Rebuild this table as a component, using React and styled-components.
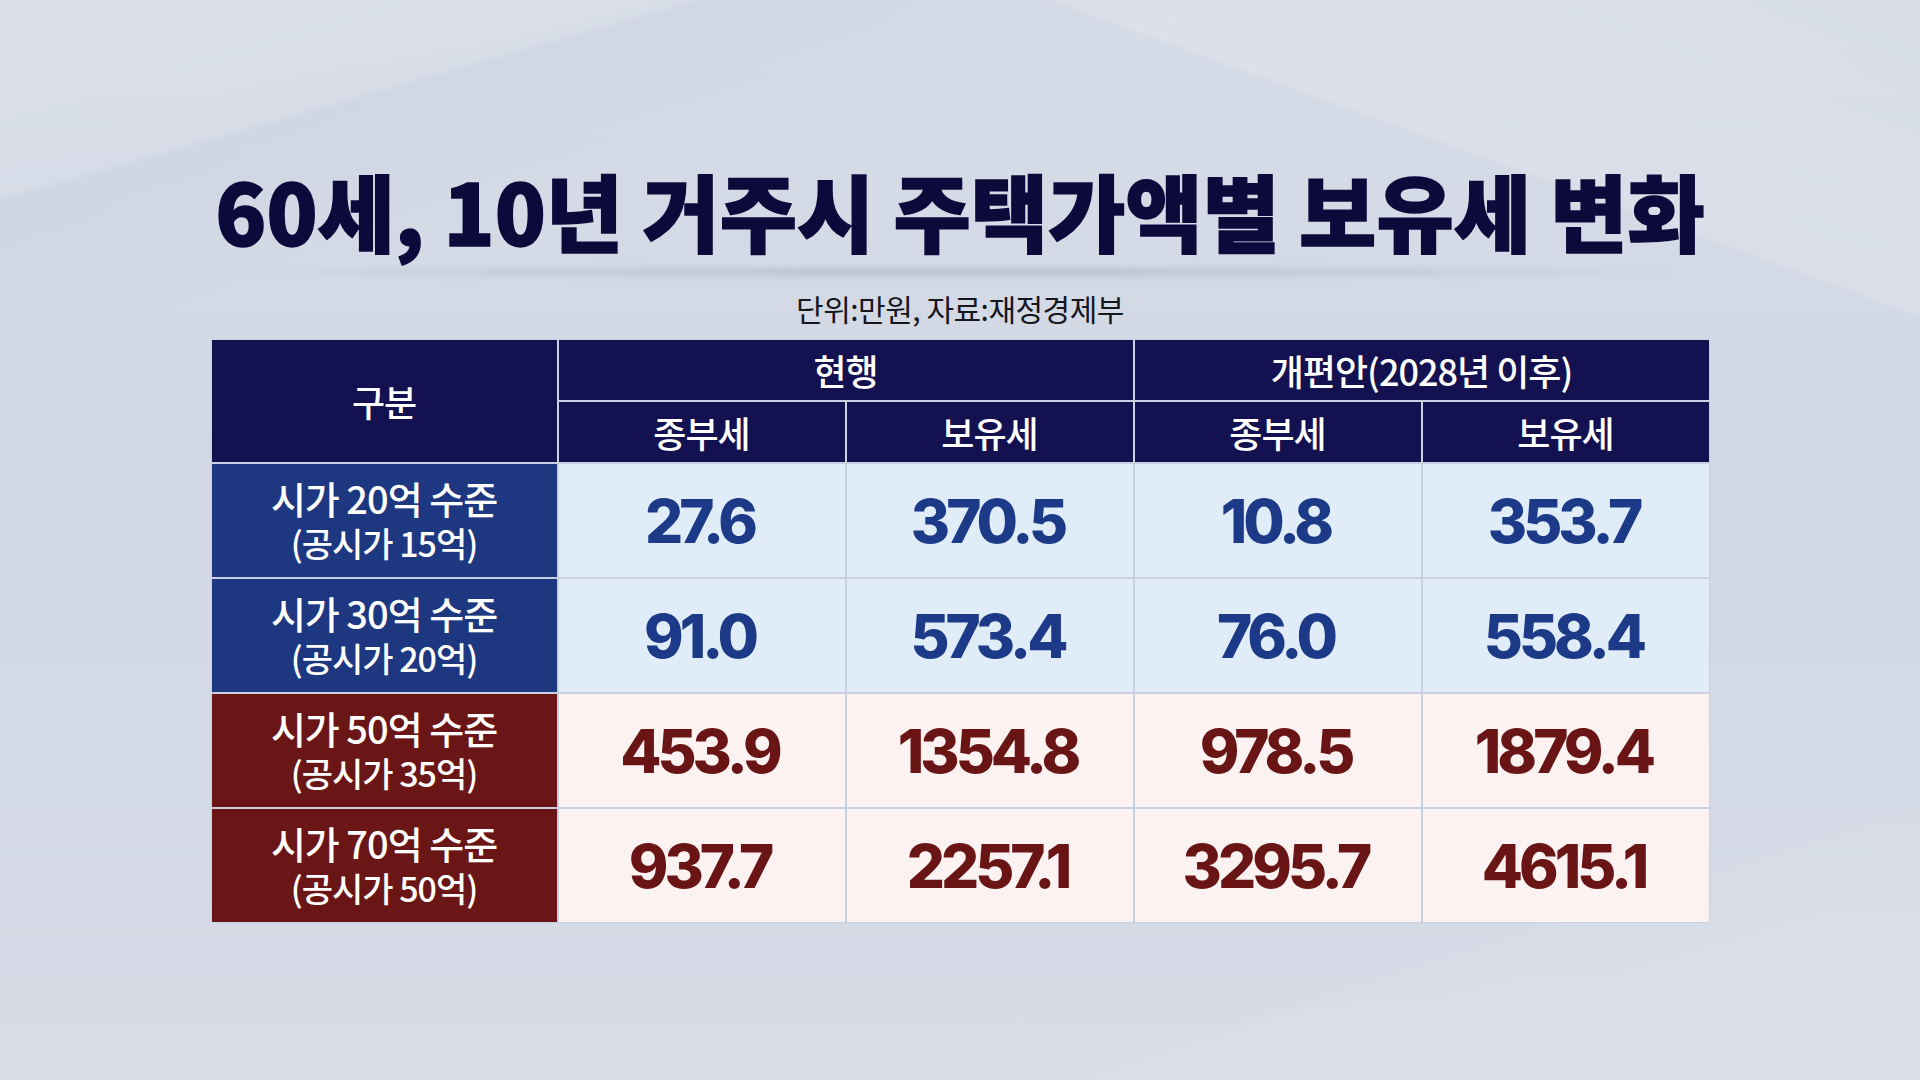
import React from "react";
import styled, { createGlobalStyle } from "styled-components";

const GlobalStyle = createGlobalStyle`
    html, body {
        margin: 0;
        padding: 0;
    }
    body {
        font-family: "Noto Sans CJK KR", "Noto Sans", sans-serif;
    }
`;

const Page = styled.div`
    width: 1920px;
    height: 1080px;
    overflow: hidden;
    display: flex;
    flex-direction: column;
    align-items: center;
    box-sizing: border-box;
    padding-top: 162px;
    background:
        linear-gradient(164deg, rgba(255, 255, 255, 0.12) 0%, rgba(255, 255, 255, 0.06) 12%, rgba(150, 160, 185, 0.08) 12.5%, transparent 22%),
        linear-gradient(20deg, transparent 82%, rgba(255, 255, 255, 0.14) 82.4%, rgba(255, 255, 255, 0.04) 100%),
        linear-gradient(-18deg, rgba(255, 255, 255, 0.12) 0%, rgba(255, 255, 255, 0.05) 16%, transparent 16.4%),
        linear-gradient(180deg, #d6dce7 0%, #d1d8e4 45%, #d7dce7 100%);
`;

const Title = styled.h1`
    margin: 0;
    font-family: "Noto Sans CJK KR", sans-serif;
    font-weight: 900;
    font-size: 84px;
    line-height: 96px;
    color: #0b0a3b;
    -webkit-text-stroke: 1.5px #0b0a3b;
`;

const TitleShadow = styled.div`
    width: 1460px;
    height: 10px;
    margin-top: 9px;
    border-radius: 50%;
    background: radial-gradient(ellipse at center, rgba(140, 150, 172, 0.5) 0%, rgba(140, 150, 172, 0.18) 55%, transparent 72%);
    filter: blur(3px);
`;

const Source = styled.div`
    margin-top: 13px;
    font-size: 30px;
    line-height: 36px;
    letter-spacing: -0.5px;
    color: #16161e;
`;

const Table = styled.div`
    margin-top: 13px;
    width: 1499px;
    display: grid;
    grid-template-columns: 345px repeat(4, 1fr);
    grid-template-rows: 60px 60px repeat(4, 113px);
    gap: 2px;
    padding: 1px;
    box-sizing: border-box;
    background: #c8d0e2;
`;

const HeadCell = styled.div`
    display: flex;
    align-items: center;
    justify-content: center;
    background: #13114f;
    color: #ffffff;
    font-size: 36px;
    line-height: 44px;
    font-weight: 500;
    letter-spacing: -1px;
    grid-column: ${p => p.$col || "auto"};
    grid-row: ${p => p.$row || "auto"};
`;

const LabelCell = styled.div`
    display: flex;
    flex-direction: column;
    align-items: center;
    justify-content: center;
    gap: 4px;
    padding-bottom: 2px;
    background: ${p => (p.$tone === "red" ? "#6b1616" : "#1d3781")};
    color: #ffffff;
    font-weight: 500;
    letter-spacing: -1px;
`;

const LabelMain = styled.span`
    font-size: 38px;
    line-height: 42px;
`;

const LabelSub = styled.span`
    font-size: 34px;
    line-height: 40px;
`;

const ValueCell = styled.div`
    display: flex;
    align-items: center;
    justify-content: center;
    background: ${p => (p.$tone === "red" ? "#fdf2f2" : "#e0edf9")};
    color: ${p => (p.$tone === "red" ? "#6a1515" : "#1d3a88")};
    font-family: Inter, "Noto Sans", sans-serif;
    font-weight: 800;
    font-size: 60px;
    letter-spacing: -4px;
    padding-right: 4px;
`;

const rows = [
    { tone: "blue", main: "시가 20억 수준", sub: "(공시가 15억)", values: ["27.6", "370.5", "10.8", "353.7"] },
    { tone: "blue", main: "시가 30억 수준", sub: "(공시가 20억)", values: ["91.0", "573.4", "76.0", "558.4"] },
    { tone: "red", main: "시가 50억 수준", sub: "(공시가 35억)", values: ["453.9", "1354.8", "978.5", "1879.4"] },
    { tone: "red", main: "시가 70억 수준", sub: "(공시가 50억)", values: ["937.7", "2257.1", "3295.7", "4615.1"] },
];

const App = () => {
    return (
        <>
            <GlobalStyle />
            <Page>
                <Title>60세, 10년 거주시 주택가액별 보유세 변화</Title>
                <TitleShadow />
                <Source>단위:만원, 자료:재정경제부</Source>
                <Table>
                    <HeadCell $row="1 / span 2">구분</HeadCell>
                    <HeadCell $col="2 / span 2">현행</HeadCell>
                    <HeadCell $col="4 / span 2">개편안(2028년 이후)</HeadCell>
                    <HeadCell>종부세</HeadCell>
                    <HeadCell>보유세</HeadCell>
                    <HeadCell>종부세</HeadCell>
                    <HeadCell>보유세</HeadCell>
                    {rows.map(row => (
                        <React.Fragment key={row.main}>
                            <LabelCell $tone={row.tone}>
                                <LabelMain>{row.main}</LabelMain>
                                <LabelSub>{row.sub}</LabelSub>
                            </LabelCell>
                            {row.values.map((value, i) => (
                                <ValueCell key={i} $tone={row.tone}>
                                    {value}
                                </ValueCell>
                            ))}
                        </React.Fragment>
                    ))}
                </Table>
            </Page>
        </>
    );
};

export default App;
